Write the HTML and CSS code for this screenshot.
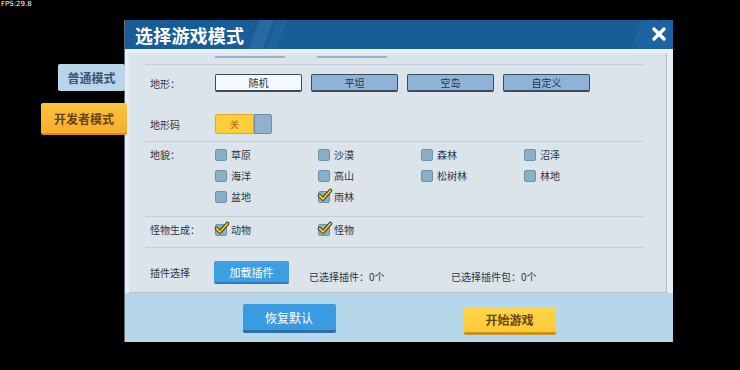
FILE: index.html
```html
<!DOCTYPE html>
<html lang="zh-CN">
<head>
    <meta charset="UTF-8">
    <meta name="viewport" content="width=device-width, initial-scale=1.0">
    <title>选择游戏模式</title>
    <link rel="stylesheet" href="styles.css">
</head>
<body>
    <div class="fps">FPS:29.8</div>

    <div class="stage">
        <div class="side-tabs">
            <div class="tab tab-normal">普通模式</div>
            <div class="tab tab-dev">开发者模式</div>
        </div>

        <div class="dialog">
            <div class="titlebar">
                <h1>选择游戏模式</h1>
                <div class="stripes"><span></span><span></span></div>
                <div class="title-corner"></div>
                <button class="close-btn" aria-label="关闭">
                    <svg width="16" height="16" viewBox="0 0 16 16">
                        <path d="M3 3 L13 13 M13 3 L3 13" stroke="#fff" stroke-width="3.4" stroke-linecap="round"/>
                    </svg>
                </button>
            </div>

            <div class="dialog-main">
                <div class="panel">
                    <div class="scroll-tail"><span></span><span></span></div>

                    <!-- 地形 -->
                    <div class="group group-terrain">
                        <div class="row">
                            <div class="label">地形：</div>
                            <div class="terrain-buttons">
                                <button class="terrain-btn selected">随机</button>
                                <button class="terrain-btn">平坦</button>
                                <button class="terrain-btn">空岛</button>
                                <button class="terrain-btn">自定义</button>
                            </div>
                        </div>
                        <div class="row row-code">
                            <div class="label">地形码</div>
                            <div class="toggle">
                                <span class="toggle-on">关</span>
                                <span class="toggle-off"></span>
                            </div>
                        </div>
                    </div>

                    <!-- 地貌 -->
                    <div class="group group-biome">
                        <div class="row row-top">
                            <div class="label label-tall">地貌：</div>
                            <div class="options">
                                <label class="opt"><span class="box"></span>草原</label>
                                <label class="opt"><span class="box"></span>沙漠</label>
                                <label class="opt"><span class="box"></span>森林</label>
                                <label class="opt"><span class="box"></span>沼泽</label>
                                <label class="opt"><span class="box"></span>海洋</label>
                                <label class="opt"><span class="box"></span>高山</label>
                                <label class="opt"><span class="box"></span>松树林</label>
                                <label class="opt"><span class="box"></span>林地</label>
                                <label class="opt"><span class="box"></span>盆地</label>
                                <label class="opt"><span class="box checked"><svg width="16" height="16" viewBox="0 0 16 16"><path d="M2.5 7.5 L6 11 L13.5 2.5" fill="none" stroke="#3b3416" stroke-width="3.6" stroke-linecap="round" stroke-linejoin="round"/><path d="M2.5 7.5 L6 11 L13.5 2.5" fill="none" stroke="#f6d21e" stroke-width="1.8" stroke-linecap="round" stroke-linejoin="round"/></svg></span>雨林</label>
                            </div>
                        </div>
                    </div>

                    <!-- 怪物生成 -->
                    <div class="group group-monster">
                        <div class="row">
                            <div class="label">怪物生成：</div>
                            <div class="options">
                                <label class="opt"><span class="box checked"><svg width="16" height="16" viewBox="0 0 16 16"><path d="M2.5 7.5 L6 11 L13.5 2.5" fill="none" stroke="#3b3416" stroke-width="3.6" stroke-linecap="round" stroke-linejoin="round"/><path d="M2.5 7.5 L6 11 L13.5 2.5" fill="none" stroke="#f6d21e" stroke-width="1.8" stroke-linecap="round" stroke-linejoin="round"/></svg></span>动物</label>
                                <label class="opt"><span class="box checked"><svg width="16" height="16" viewBox="0 0 16 16"><path d="M2.5 7.5 L6 11 L13.5 2.5" fill="none" stroke="#3b3416" stroke-width="3.6" stroke-linecap="round" stroke-linejoin="round"/><path d="M2.5 7.5 L6 11 L13.5 2.5" fill="none" stroke="#f6d21e" stroke-width="1.8" stroke-linecap="round" stroke-linejoin="round"/></svg></span>怪物</label>
                            </div>
                        </div>
                    </div>

                    <!-- 插件选择 -->
                    <div class="group group-plugin">
                        <div class="row row-plugin">
                            <div class="label">插件选择</div>
                            <button class="load-btn">加载插件</button>
                            <span class="plugin-count">已选择插件：0个</span>
                            <span class="plugin-count">已选择插件包：0个</span>
                        </div>
                    </div>
                </div>
            </div>

            <div class="footer">
                <button class="big-btn btn-blue">恢复默认</button>
                <button class="big-btn btn-yellow">开始游戏</button>
            </div>
        </div>
    </div>
</body>
</html>
```

FILE: styles.css
```css
* {
    margin: 0;
    padding: 0;
    box-sizing: border-box;
}

body {
    background-color: #000;
    width: 740px;
    height: 370px;
    overflow: hidden;
    font-family: "Noto Sans CJK SC", "Noto Sans", sans-serif;
    color: #2b3643;
    position: relative;
}

button {
    font-family: inherit;
    border: none;
    cursor: pointer;
}

.fps {
    position: absolute;
    top: 0;
    left: 1px;
    font-family: "DejaVu Sans", sans-serif;
    font-size: 7px;
    color: #fff;
    line-height: 9px;
}

.stage {
    display: flex;
    align-items: flex-start;
    padding: 20px 0 0 41px;
}

/* left mode tabs */
.side-tabs {
    width: 86px;
    display: flex;
    flex-direction: column;
    align-items: flex-end;
    gap: 12px;
    padding-top: 44px;
    position: relative;
    z-index: 2;
}

.tab {
    display: flex;
    align-items: center;
    justify-content: center;
    font-size: 12px;
    font-weight: 700;
    border-radius: 2px;
}

.tab-normal {
    width: 67px;
    height: 27px;
    margin-right: 2px;
    background-color: #b8d5ea;
    color: #3a5670;
}

.tab-dev {
    width: 86px;
    height: 32px;
    background: linear-gradient(#fbc43e, #f6ad2c);
    color: #6a4210;
    border-bottom: 2px solid #d98b1c;
}

/* dialog */
.dialog {
    width: 549px;
    height: 322px;
    margin-left: -3px;
    display: flex;
    flex-direction: column;
    background-color: #e8edf1;
    border-left: 1px solid #5f6d79;
}

.titlebar {
    height: 29px;
    background-color: #185d97;
    display: flex;
    align-items: center;
    position: relative;
    overflow: hidden;
    padding-left: 10px;
}

.titlebar h1 {
    font-size: 18px;
    font-weight: 700;
    color: #fff;
    letter-spacing: 0.2px;
}

.stripes {
    display: flex;
    gap: 4px;
    margin-left: 10px;
    height: 29px;
}

.stripes span {
    width: 14px;
    height: 100%;
    background-color: #2869a1;
    transform: skewX(-20deg);
}

.stripes span + span {
    width: 10px;
    background-color: #20639c;
}

.title-corner {
    position: absolute;
    right: 0;
    top: 0;
    width: 42px;
    height: 29px;
    background-color: #1e639f;
    transform: skewX(-20deg);
    transform-origin: bottom;
}

.close-btn {
    position: absolute;
    right: 6px;
    top: 6px;
    background: none;
    width: 16px;
    height: 16px;
    display: flex;
}

.dialog-main {
    padding: 4px 6px 0 4px;
}

.panel {
    height: 240px;
    background-color: #dce4eb;
    border-right: 1px solid #b4bfc9;
    border-bottom: 1px solid #b4bfc9;
    padding: 0 22px 0 16px;
    overflow: hidden;
}

.scroll-tail {
    height: 11px;
    display: flex;
    gap: 32px;
    padding: 3px 0 0 70px;
}

.scroll-tail span {
    width: 70px;
    height: 2px;
    background-color: #9db2c6;
}

.group {
    border-top: 1px solid #c4ced8;
}

.group-terrain {
    padding: 9px 0 7px;
}

.group-biome {
    padding: 2px 0 9px;
}

.group-monster {
    padding: 2px 0 7px;
}

.group-plugin {
    padding: 13px 0 7px;
}

.row {
    display: flex;
    align-items: center;
    font-size: 10px;
}

.row-top {
    align-items: flex-start;
}

.row-code {
    margin-top: 22px;
}

.label {
    width: 70px;
    flex-shrink: 0;
    padding-left: 5px;
    color: #2b3643;
}

.label-tall {
    line-height: 21px;
}

/* terrain type buttons */
.terrain-buttons {
    display: flex;
    gap: 9px;
}

.terrain-btn {
    width: 87px;
    height: 18px;
    font-size: 10px;
    color: #1f3550;
    background-color: #8fb3d6;
    border: 1px solid #3b4c5e;
    border-bottom-width: 2px;
    border-radius: 2px;
}

.terrain-btn.selected {
    background-color: #f3f9fe;
    color: #1f2d3d;
}

/* toggle */
.toggle {
    display: flex;
    height: 20px;
}

.toggle-on {
    width: 39px;
    background-color: #fbce3a;
    border: 1px solid #e2a628;
    border-radius: 2px 0 0 2px;
    color: #b8641a;
    font-size: 9px;
    display: flex;
    align-items: center;
    justify-content: center;
}

.toggle-off {
    width: 18px;
    background-color: #8fb1ce;
    border: 1px solid #6c8fac;
    border-radius: 0 2px 2px 0;
}

/* checkbox options */
.options {
    display: grid;
    grid-template-columns: repeat(4, 103px);
}

.opt {
    height: 21px;
    display: flex;
    align-items: center;
    gap: 4px;
    color: #2b3643;
}

.box {
    width: 12px;
    height: 12px;
    background-color: #8bafc7;
    border: 1px solid #6d92ae;
    border-radius: 2px;
    position: relative;
    flex-shrink: 0;
}

.box svg {
    position: absolute;
    left: -2px;
    top: -4px;
}

/* plugins */
.row-plugin {
    align-items: flex-end;
}

.row-plugin .label {
    align-self: center;
}

.load-btn {
    width: 75px;
    height: 23px;
    margin-left: -1px;
    background-color: #3d9ee2;
    border-bottom: 2px solid #2d7cbc;
    border-radius: 2px;
    color: #fff;
    font-size: 11px;
}

.plugin-count {
    width: 142px;
    margin-left: 20px;
    font-size: 10px;
    line-height: 12px;
    margin-bottom: 1px;
}

.plugin-count + .plugin-count {
    margin-left: 0;
}

/* footer buttons */
.footer {
    flex: 1;
    background-color: #b6d7ea;
    display: flex;
    justify-content: center;
    align-items: center;
    gap: 128px;
    padding-top: 2px;
}

.big-btn {
    width: 93px;
    height: 29px;
    font-size: 12px;
    border-radius: 2px;
}

.btn-blue {
    background-color: #3b9be2;
    border-bottom: 3px solid #2b6ea8;
    color: #fff;
}

.btn-yellow {
    width: 92px;
    height: 28px;
    margin-top: 5px;
    background: linear-gradient(#fed64a, #fbc935);
    border-bottom: 3px solid #c9921e;
    color: #6a4310;
    font-weight: 700;
}
```
